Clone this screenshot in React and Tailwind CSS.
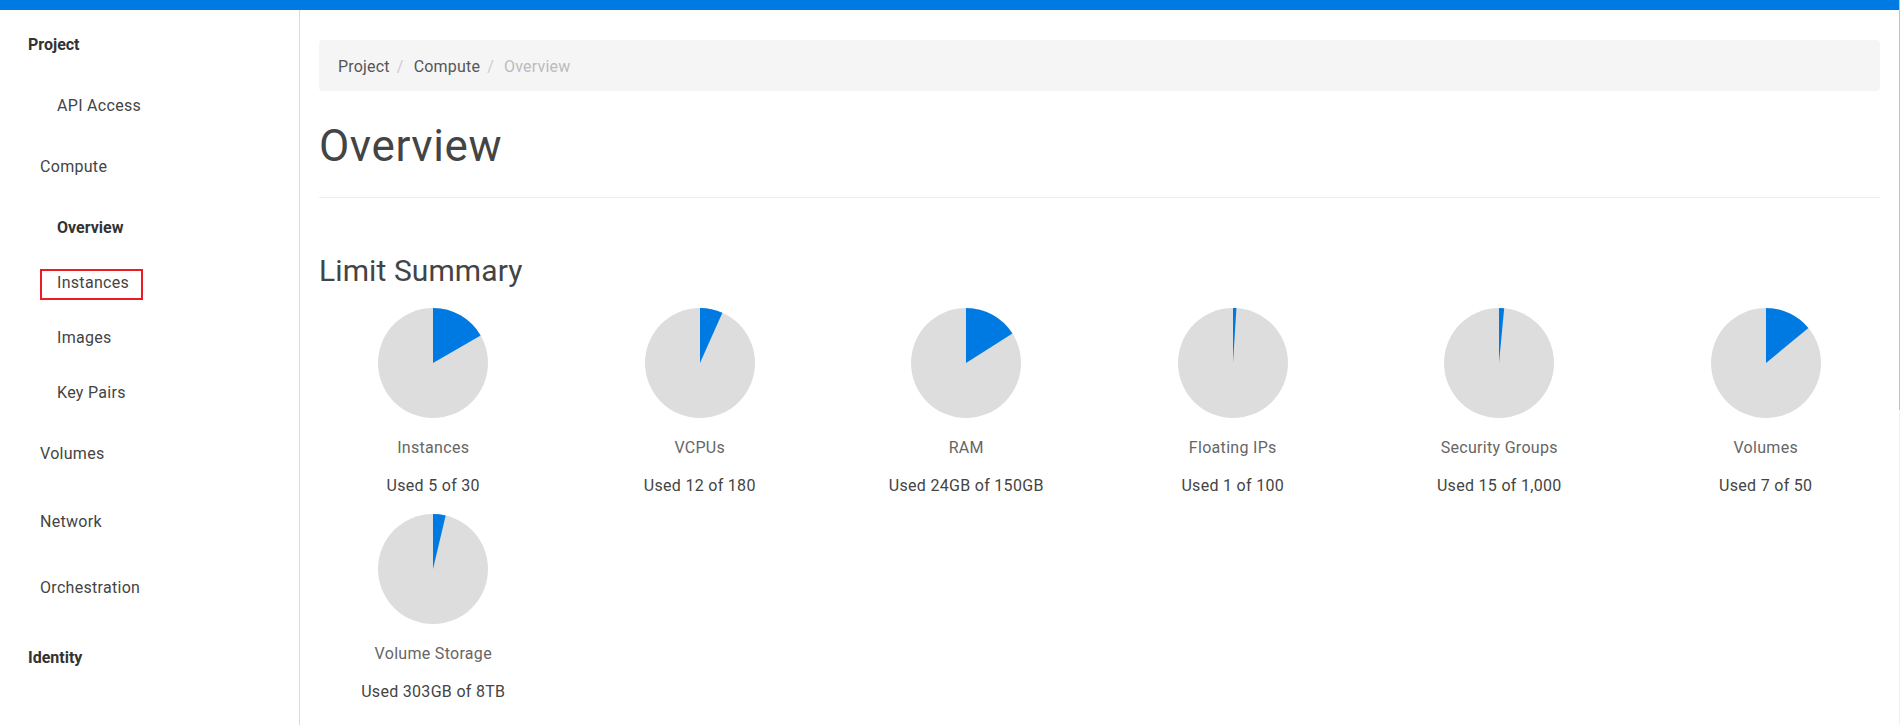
const FONT = "font-['Roboto',sans-serif]";

function Pie({ pct }) {
  const a = (pct / 100) * 2 * Math.PI;
  const r = 55;
  const x = 55 + r * Math.sin(a);
  const y = 55 - r * Math.cos(a);
  return (
    <svg width="110" height="110" viewBox="0 0 110 110" className="block mx-auto">
      <circle cx="55" cy="55" r="55" fill="#dddddd" />
      <path d={`M55 55 L55 0 A55 55 0 0 1 ${x} ${y} Z`} fill="#007ae3" />
    </svg>
  );
}

const limits = [
  ["Instances", "Used 5 of 30", 16.67],
  ["VCPUs", "Used 12 of 180", 6.67],
  ["RAM", "Used 24GB of 150GB", 16],
  ["Floating IPs", "Used 1 of 100", 1],
  ["Security Groups", "Used 15 of 1,000", 1.5],
  ["Volumes", "Used 7 of 50", 14],
  ["Volume Storage", "Used 303GB of 8TB", 3.7],
];

function Sidebar() {
  return (
    <nav className="w-[300px] shrink-0 border-r border-[#d9d9d9] pt-[25px] text-[16px] leading-5 tracking-[0.3px] text-[#444]">
      <div className="pl-7 font-bold tracking-normal text-[#333]">Project</div>
      <div className="mt-[41px] pl-[57px]">API Access</div>
      <div className="mt-[41px] pl-10">Compute</div>
      <div className="mt-[41px] pl-[57px] font-bold tracking-normal text-[#333]">Overview</div>
      <div className="mt-[35px] pl-[57px] relative">
        Instances
        <span className="absolute left-10 top-[-4px] w-[103px] h-[31px] border-2 border-[#ed1c24]" />
      </div>
      <div className="mt-[35px] pl-[57px]">Images</div>
      <div className="mt-[35px] pl-[57px]">Key Pairs</div>
      <div className="mt-[41px] pl-10">Volumes</div>
      <div className="mt-[48px] pl-10">Network</div>
      <div className="mt-[46px] pl-10">Orchestration</div>
      <div className="mt-[50px] pl-7 font-bold tracking-normal text-[#333]">Identity</div>
    </nav>
  );
}

export default function App() {
  return (
    <div className={`${FONT} relative h-screen overflow-hidden bg-white flex flex-col`}>
      <div className="h-[10px] bg-[#007ae3] shrink-0" />
      <div className="flex flex-1 min-h-0">
        <Sidebar />
        <main className="flex-1 min-w-0 pr-px">
          <div className="mx-[19px] mt-[30px] h-[51px] rounded bg-[#f5f5f5] px-[19px] pt-[2px] flex items-center text-[16px] tracking-[0.2px] text-[#555]">
            <span>Project</span>
            <span className="pl-[7px] pr-[10px] text-[#ccc]">/</span>
            <span>Compute</span>
            <span className="pl-[7px] pr-[10px] text-[#ccc]">/</span>
            <span className="text-[#bbb]">Overview</span>
          </div>
          <h1 className="mx-[19px] mt-[31px] text-[44px] leading-[48px] font-normal tracking-[0.6px] text-[#444]">Overview</h1>
          <div className="mx-[19px] mt-[27px] border-t border-[#eeeeee]" />
          <h2 className="mx-[19px] mt-[57px] text-[30px] leading-8 font-normal tracking-[0.1px] text-[#444]">Limit Summary</h2>
          <div className="mt-[21px] grid grid-cols-6">
            {limits.map(([name, used, pct]) => (
              <div key={name} className="h-[206px] text-center text-[16px] leading-5 tracking-[0.3px]">
                <Pie pct={pct} />
                <div className="mt-5 text-[#666]">{name}</div>
                <div className="mt-[18px] text-[#444]">{used}</div>
              </div>
            ))}
          </div>
        </main>
      </div>
      <div className="absolute right-0 top-0 bottom-0 w-px bg-[#f0f0f0]">
        <div className="h-[410px] bg-[#c1c1c1]" />
      </div>
    </div>
  );
}
